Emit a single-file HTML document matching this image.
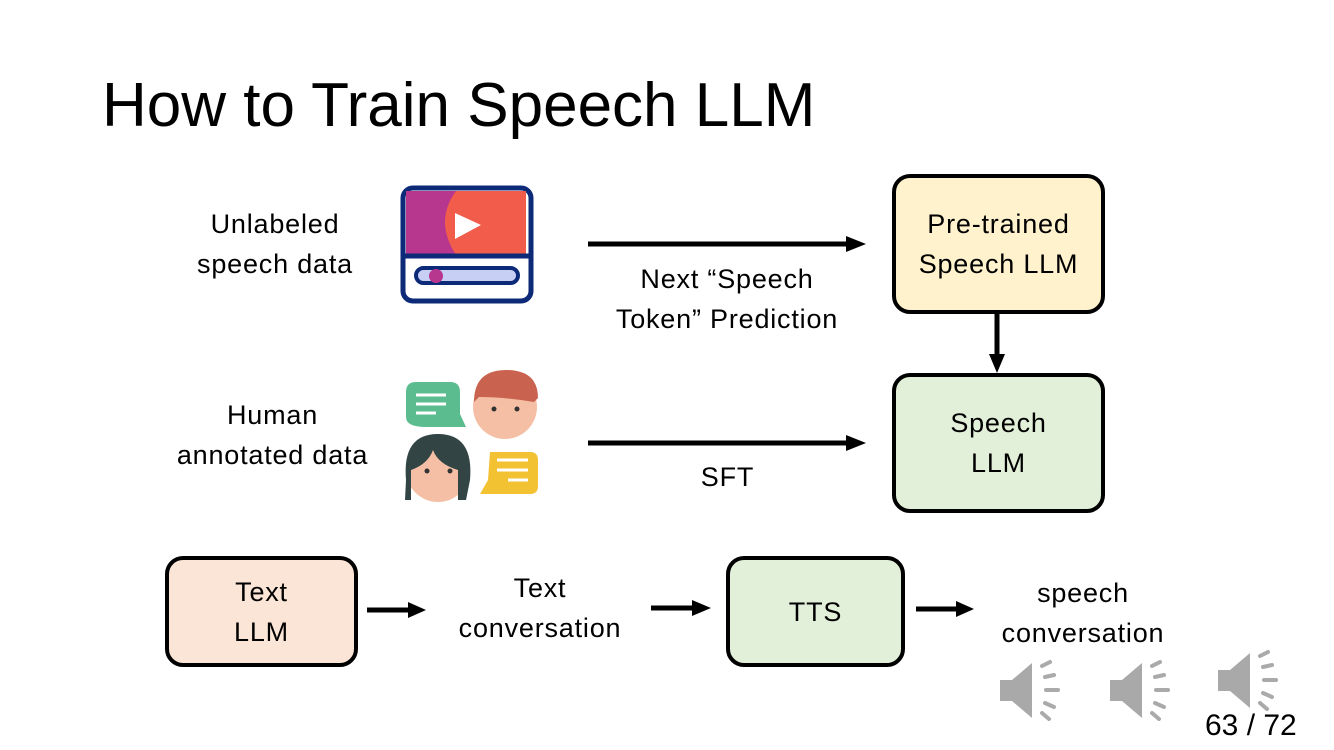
<!DOCTYPE html>
<html><head><style>
body{margin:0;width:1334px;height:750px;background:#fff;position:relative;overflow:hidden;font-family:"Liberation Sans",sans-serif;color:#000}
.t{position:absolute;font-size:27px;line-height:40px;text-align:center;white-space:nowrap;letter-spacing:0.8px}
.box{position:absolute;border:4px solid #000;border-radius:18px;box-sizing:border-box;display:flex;align-items:center;justify-content:center;text-align:center;font-size:27px;line-height:40px;letter-spacing:0.8px}
svg{position:absolute;left:0;top:0}
</style></head><body>
<div style="position:absolute;left:102px;top:66px;font-size:62px;line-height:80px;white-space:nowrap">How to Train Speech LLM</div>
<div class="t" style="left:155px;top:204px;width:240px">Unlabeled<br>speech data</div>
<div class="t" style="left:140px;top:395px;width:265px">Human<br>annotated data</div>
<div class="t" style="left:577px;top:259px;width:300px">Next “Speech<br>Token” Prediction</div>
<div class="t" style="left:680px;top:457px;width:95px">SFT</div>
<div class="t" style="left:420px;top:568px;width:240px">Text<br>conversation</div>
<div class="t" style="left:963px;top:573px;width:240px">speech<br>conversation</div>
<div class="box" style="left:892px;top:174px;width:213px;height:140px;background:#fff2cc">Pre-trained<br>Speech LLM</div>
<div class="box" style="left:892px;top:373px;width:213px;height:140px;background:#e2f0d9">Speech<br>LLM</div>
<div class="box" style="left:165px;top:556px;width:193px;height:111px;background:#fbe5d6">Text<br>LLM</div>
<div class="box" style="left:726px;top:556px;width:179px;height:111px;background:#e2f0d9">TTS</div>
<div style="position:absolute;left:1205px;top:706px;font-size:30px;line-height:40px;white-space:nowrap">63 / 72</div>
<svg width="1334" height="750">
<g stroke="#000" stroke-width="5">
<line x1="588" y1="244" x2="848" y2="244"/><path d="M846 236L866 244L846 252z" stroke="none"/>
<line x1="588" y1="443" x2="848" y2="443"/><path d="M846 435L866 443L846 451z" stroke="none"/>
<line x1="997" y1="314" x2="997" y2="356"/><path d="M989 354L997 373L1005 354z" stroke="none"/>
<line x1="367" y1="610" x2="410" y2="610"/><path d="M408 602L426 610L408 618z" stroke="none"/>
<line x1="651" y1="608" x2="694" y2="608"/><path d="M692 600L711 608L692 616z" stroke="none"/>
<line x1="916" y1="609" x2="958" y2="609"/><path d="M956 601L974 609L956 617z" stroke="none"/>
</g>
<rect x="403" y="188" width="128" height="113" rx="10" fill="#fff" stroke="#0d2a78" stroke-width="5"/>
<path d="M406 191h120v64h-120z" fill="#f25c4a"/>
<path d="M406 191h50q-22 30 0 64h-50z" fill="#b7378f"/>
<path d="M455 213l26 12l-26 14z" fill="#fff"/>
<line x1="403" y1="256" x2="531" y2="256" stroke="#0d2a78" stroke-width="5"/>
<rect x="416" y="268" width="102" height="15" rx="7.5" fill="#c8cff5" stroke="#0d2a78" stroke-width="4"/>
<circle cx="436" cy="276" r="7" fill="#b7378f"/>
<path d="M406 392q0-10 10-10h34q10 0 10 10v22l6 13h-40q-20 0-20-10z" fill="#5bbd8f"/>
<g stroke="#fff" stroke-width="3"><line x1="416" y1="395" x2="446" y2="395"/><line x1="416" y1="404" x2="446" y2="404"/><line x1="416" y1="413" x2="436" y2="413"/></g>
<circle cx="505" cy="407" r="32" fill="#f5bfa5"/>
<path d="M474 402q0-32 32-32q32 0 32 28l-4 4q-30-5-55-5z" fill="#c9634f"/>
<circle cx="438" cy="470" r="32" fill="#f5bfa5"/>
<path d="M406 480q-4-46 32-46q36 0 32 46l-4 20h-8v-30q-20-6-25-20q-5 14-22 20v30h-6z" fill="#324544"/>
<path d="M490 452h40q8 0 8 8v26q0 8-8 8h-50l8-14z" fill="#f2c233"/>
<g stroke="#fff" stroke-width="3"><line x1="497" y1="460" x2="528" y2="460"/><line x1="497" y1="470" x2="528" y2="470"/><line x1="508" y1="480" x2="528" y2="480"/></g>
<g fill="#333"><circle cx="494" cy="409" r="2.5"/><circle cx="517" cy="409" r="2.5"/><circle cx="427" cy="471" r="2.5"/><circle cx="450" cy="471" r="2.5"/></g>
<g id="sp" fill="#a9a9a9">
<path d="M1000 680h12l20-17v55l-20-17h-12z"/>
<g stroke="#aaa" stroke-width="4" stroke-linecap="round" fill="none"><line x1="1042" y1="666" x2="1050" y2="662"/><line x1="1045" y1="677" x2="1054" y2="675"/><line x1="1046" y1="690" x2="1058" y2="690"/><line x1="1045" y1="703" x2="1054" y2="707"/><line x1="1042" y1="713" x2="1049" y2="719"/></g>
</g>
<use href="#sp" x="110"/>
<use href="#sp" x="218" y="-10"/>
</svg>
</body></html>
